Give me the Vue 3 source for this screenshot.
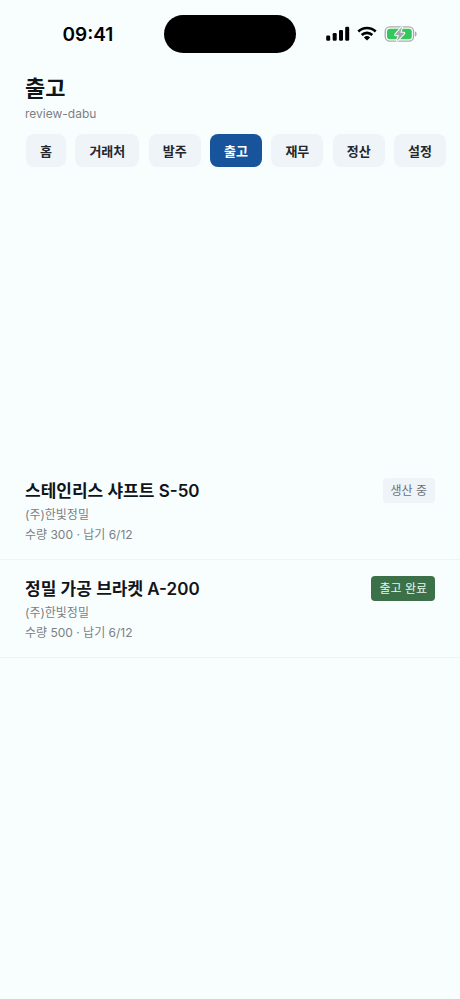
<script setup>
import { ref } from 'vue'

const tabs = ['홈', '거래처', '발주', '출고', '재무', '정산', '설정']
const active = ref('출고')

const shipments = [
  { name: '스테인리스 샤프트 S-50', client: '(주)한빛정밀', qty: 300, due: '6/12', status: '생산 중', done: false },
  { name: '정밀 가공 브라켓 A-200', client: '(주)한빛정밀', qty: 500, due: '6/12', status: '출고 완료', done: true },
]
</script>

<template>
  <div class="screen">
    <div class="status-bar">
      <span class="clock">09:41</span>
      <span class="island"></span>
      <div class="indicators">
        <svg class="signal" width="24" height="16" viewBox="0 0 24 16" aria-hidden="true">
          <rect x="0.2" y="9.4" width="4" height="5.4" rx="1.3" />
          <rect x="6.7" y="7" width="4" height="7.8" rx="1.3" />
          <rect x="13" y="4" width="4" height="10.8" rx="1.3" />
          <rect x="19.2" y="0.8" width="4" height="14" rx="1.3" />
        </svg>
        <svg class="wifi" width="20" height="16" viewBox="0 0 20 16" aria-hidden="true">
          <path d="M1.3 5.5a12.4 12.4 0 0 1 17.4 0" />
          <path d="M4.7 9a7.6 7.6 0 0 1 10.6 0" />
          <path class="dot" d="M10 14.6 6.9 11.5a4.5 4.5 0 0 1 6.2 0Z" />
        </svg>
        <svg class="battery" width="34" height="16" viewBox="0 0 34 16" aria-hidden="true">
          <rect class="shell" x="1.2" y="0.9" width="28.4" height="14.2" rx="4.6" />
          <rect class="charge" x="3" y="2.7" width="24.8" height="10.6" rx="3" />
          <path class="cap" d="M31 5.6c2.2.6 2.2 4.2 0 4.8Z" />
          <path class="bolt" d="M18.2 0.6 11.3 8.5c-.4.5-.2.8.4.8h3.3L12.6 15.4l7.5-7.9c.4-.5.2-.8-.4-.8h-3.3Z" />
        </svg>
      </div>
    </div>

    <header class="header">
      <h1>출고</h1>
      <p>review-dabu</p>
    </header>

    <nav class="tabs">
      <button
        v-for="tab in tabs"
        :key="tab"
        type="button"
        class="tab"
        :class="{ active: tab === active }"
        @click="active = tab"
      >{{ tab }}</button>
    </nav>

    <ul class="list">
      <li v-for="item in shipments" :key="item.name" class="row">
        <div class="info">
          <h2>{{ item.name }}</h2>
          <p>{{ item.client }}</p>
          <p>수량 {{ item.qty }} · 납기 {{ item.due }}</p>
        </div>
        <span class="badge" :class="{ done: item.done }">{{ item.status }}</span>
      </li>
    </ul>
  </div>
</template>

<style>
body {
  background: #f8fefe;
}
</style>

<style scoped>
.screen {
  min-height: 100vh;
  background: #f8fefe;
  color: #111418;
  font-family: Inter, "Noto Sans CJK KR", sans-serif;
}

.status-bar {
  display: grid;
  grid-template-columns: 1fr auto 1fr;
  align-items: center;
  height: 68px;
}

.clock {
  justify-self: center;
  padding: 2px 0 0 12px;
  color: #000;
  font-size: 19px;
  font-weight: 600;
  line-height: 24px;
}

.island {
  width: 132px;
  height: 38px;
  border-radius: 19px;
  background: #000;
}

.indicators {
  display: flex;
  justify-content: center;
  gap: 7px;
  padding-right: 12px;
}

.wifi path {
  fill: none;
  stroke: #000;
  stroke-width: 2.6;
}

.wifi .dot {
  fill: #000;
  stroke: none;
}

.battery .shell {
  fill: none;
  stroke: #a9abac;
  stroke-width: 1.3;
}

.battery .charge {
  fill: #35c759;
}

.battery .cap {
  fill: #a9abac;
}

.battery .bolt {
  fill: #a5a7a8;
  stroke: #f8fefe;
  stroke-width: 2;
  paint-order: stroke;
}

.header {
  padding: 4px 25px 0;
}

h1,
h2,
p {
  margin: 0;
}

h1 {
  font-size: 22px;
  font-weight: 700;
  line-height: 32px;
}

.header p {
  color: #7b7f85;
  font-size: 12px;
  line-height: 20px;
}

.tabs {
  display: flex;
  justify-content: space-between;
  gap: 8px;
  padding: 10px 14px 0 26px;
  overflow: hidden;
}

.tab {
  flex: none;
  height: 33px;
  padding: 0 14px;
  border: 0;
  border-radius: 8px;
  background: #eff4f9;
  color: #23272e;
  font: inherit;
  font-size: 13px;
  font-weight: 600;
  line-height: 20px;
}

.tab.active {
  background: #17549b;
  color: #fff;
}

.list {
  margin: 295px 0 0;
  padding: 0;
  list-style: none;
}

.row {
  display: flex;
  align-items: flex-start;
  justify-content: space-between;
  padding: 16px 25px 14px;
  border-bottom: 1px solid #eef3f5;
}

h2 {
  margin-bottom: 1px;
  font-size: 17px;
  font-weight: 600;
  line-height: 26px;
}

.info p {
  color: #7b7f85;
  font-size: 12px;
  line-height: 20px;
}

.badge {
  flex: none;
  padding: 3px 8px;
  border-radius: 4px;
  background: #eff4f9;
  color: #6d727a;
  font-size: 12px;
  line-height: 19px;
}

.badge.done {
  background: #3c7048;
  color: #eaf6ea;
}
</style>
